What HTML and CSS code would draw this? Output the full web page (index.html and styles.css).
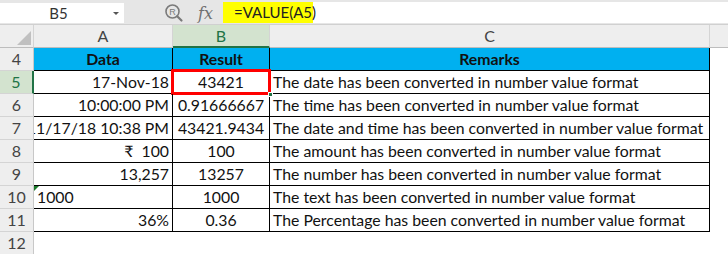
FILE: index.html
```html
<!DOCTYPE html>
<html>
<head>
<meta charset="utf-8">
<link rel="stylesheet" href="styles.css">
</head>
<body>
<div class="app">
  <div class="fbar">
    <div class="namebox"><span class="nb-text">B5</span><span class="nb-arrow"></span></div>
    <div class="fb-icons">
      <svg class="lens" width="20" height="20" viewBox="0 0 20 20">
        <circle cx="8.5" cy="8.5" r="6.5" fill="none" stroke="#7a7a7a" stroke-width="1.6"/>
        <line x1="13.2" y1="13.2" x2="17.5" y2="17.5" stroke="#7a7a7a" stroke-width="2.2" stroke-linecap="round"/>
        <text x="8.5" y="11.8" text-anchor="middle" font-family="Liberation Sans, sans-serif" font-size="9" fill="#7a7a7a">R</text>
      </svg>
      <span class="fx">fx</span>
    </div>
    <div class="finput"><span class="formula">=VALUE(A5)</span></div>
  </div>
  <div class="sheet">
    <div class="corner"><span class="tri"></span></div>
    <div class="ch">A</div>
    <div class="ch ch-sel">B</div>
    <div class="ch">C</div>
    <div class="ch ch-rest"></div>

    <div class="rh">4</div>
    <div class="c hd">Data</div>
    <div class="c hd">Result</div>
    <div class="c hd">Remarks</div>
    <div class="blank"></div>

    <div class="rh rh-sel">5</div>
    <div class="c r">17-Nov-18</div>
    <div class="c m sel">43421<span class="handle"></span></div>
    <div class="c l">The date has been converted in number value format</div>
    <div class="blank"></div>

    <div class="rh">6</div>
    <div class="c r">10:00:00 PM</div>
    <div class="c m">0.91666667</div>
    <div class="c l">The time has been converted in number value format</div>
    <div class="blank"></div>

    <div class="rh">7</div>
    <div class="c r clip"><span>11/17/18 10:38 PM</span></div>
    <div class="c m">43421.9434</div>
    <div class="c l">The date and time has been converted in number value format</div>
    <div class="blank"></div>

    <div class="rh">8</div>
    <div class="c r">₹&nbsp; 100</div>
    <div class="c m">100</div>
    <div class="c l">The amount has been converted in number value format</div>
    <div class="blank"></div>

    <div class="rh">9</div>
    <div class="c r">13,257</div>
    <div class="c m">13257</div>
    <div class="c l">The number has been converted in number value format</div>
    <div class="blank"></div>

    <div class="rh">10</div>
    <div class="c l txt">1000<span class="flag"></span></div>
    <div class="c m">1000</div>
    <div class="c l">The text has been converted in number value format</div>
    <div class="blank"></div>

    <div class="rh">11</div>
    <div class="c r">36%</div>
    <div class="c m">0.36</div>
    <div class="c l">The Percentage has been converted in number value format</div>
    <div class="blank"></div>

    <div class="rh last">12</div>
    <div class="blank"></div>
    <div class="blank"></div>
    <div class="blank"></div>
    <div class="blank"></div>
  </div>
</div>
</body>
</html>
```

FILE: styles.css
```css
* { box-sizing: border-box; }
html, body { margin: 0; padding: 0; background: #fff; }
.app { width: 728px; height: 254px; overflow: hidden; font-family: Lato, "Open Sans", sans-serif; }

.fbar {
  height: 25px;
  background: #e6e6e6;
  border-bottom: 1px solid #d0d0d0;
  display: flex;
  align-items: flex-start;
  padding-top: 3px;
}
.namebox {
  width: 124px;
  height: 20px;
  background: #fff;
  display: flex;
  align-items: center;
  position: relative;
}
.nb-text { flex: 1; text-align: center; font-size: 15px; color: #333; padding-left: 4px; }
.nb-arrow {
  width: 0; height: 0;
  border-left: 3px solid transparent;
  border-right: 3px solid transparent;
  border-top: 3px solid #555;
  margin-right: 5px;
}
.fb-icons {
  width: 99px;
  height: 20px;
  display: flex;
  align-items: center;
  padding-left: 40px;
  gap: 14px;
}
.fx { font-family: "DejaVu Serif", serif; font-style: italic; font-size: 16px; color: #707070; }
.finput { flex: 1; height: 21px; margin-top: -1px; background: #fff; }
.formula {
  display: inline-block;
  background: #ffff00;
  height: 21px;
  line-height: 21px;
  width: 90px;
  padding-left: 11px;
  font-size: 15px;
  color: #222;
}

.sheet {
  display: grid;
  grid-template-columns: 34px 139px 97px 440px 18px;
  grid-template-rows: 23px 23px repeat(7, 23px) 23px;
}
.corner { background: #eeeeee; border-right: 1px solid #d4d4d4; border-bottom: 1px solid #bdbdbd; position: relative; }
.tri {
  position: absolute; right: 2px; bottom: 2px;
  width: 0; height: 0;
  border-left: 14px solid transparent;
  border-bottom: 14px solid #c0c0c0;
}
.ch {
  background: #eeeeee;
  border-right: 1px solid #d4d4d4;
  border-bottom: 1px solid #bdbdbd;
  text-align: center;
  font-size: 16px;
  line-height: 22px;
  color: #444;
}
.ch-sel { background: #d3e3cf; color: #217346; border-bottom: 2px solid #217346; }
.ch-rest { border-right: none; }

.rh {
  background: #eeeeee;
  border-right: 1px solid #c8c8c8;
  border-bottom: 1px solid #d4d4d4;
  text-align: center;
  font-size: 16px;
  line-height: 22px;
  color: #444;
}
.rh-sel { background: #d3e3cf; color: #217346; border-right: 2px solid #217346; }
.rh.last { border-bottom: none; }

.c {
  border-right: 1px solid #000;
  border-bottom: 1px solid #000;
  font-size: 15.8px;
  line-height: 22px;
  color: #111;
  white-space: nowrap;
  overflow: hidden;
  padding: 0 3px;
  position: relative;
}
.hd { background: #00b0f0; font-weight: 700; text-align: center; }
.r { text-align: right; }
.m { text-align: center; }
.l { text-align: left; }
.clip { display: flex; justify-content: flex-end; }
.clip span { flex: none; }
.blank { background: #fff; }

.sel { overflow: visible; }
.sel::after {
  content: "";
  position: absolute;
  left: -2px; top: -2px; right: -2px; bottom: -2px;
  border: 3px solid #ff0000;
  pointer-events: none;
}
.handle {
  position: absolute; right: -4px; bottom: -4px;
  width: 5px; height: 5px; background: #217346; z-index: 2;
  border: 1px solid #fff;
}
.flag {
  position: absolute; left: 0; top: 0;
  width: 0; height: 0;
  border-right: 5px solid transparent;
  border-top: 5px solid #1a7a2a;
}
```
